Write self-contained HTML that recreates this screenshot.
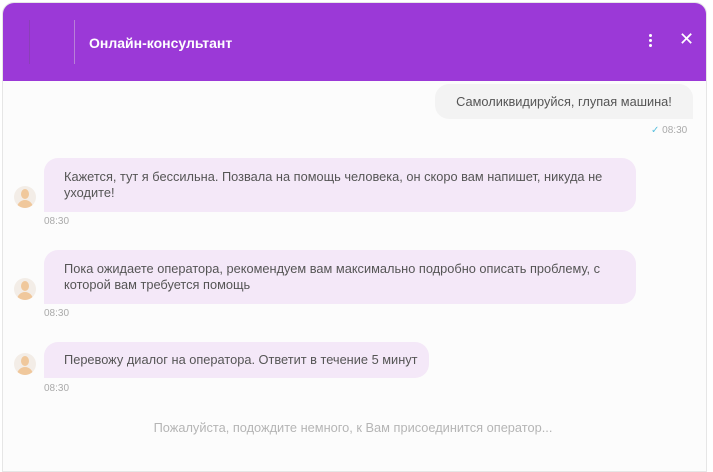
<!DOCTYPE html>
<html><head><meta charset="utf-8"><style>
*{margin:0;padding:0;box-sizing:border-box}
body{width:713px;height:464px;background:#fff;font-family:"Liberation Sans",sans-serif;position:relative;overflow:hidden}
.panel{position:absolute;left:2px;top:2px;width:705px;height:470px;background:#fcfcfc;border:1px solid #e6e6e6;border-radius:12px 12px 0 0;overflow:hidden}
.head{position:absolute;left:0;top:0;width:100%;height:78px;background:#9b39d7}
.title{position:absolute;left:86px;top:32px;color:#fff;font-weight:bold;font-size:14px}
.b{position:absolute;font-size:12.8px;color:#555;line-height:16px}
.bot{background:#f4e8f8;border-radius:14px 14px 14px 0;padding:0 19px 0 20px;display:flex;align-items:center}
.t{position:absolute;font-size:10px;color:#aaa}
.av{position:absolute;left:11px;width:22px;height:22px;border-radius:50%;background:#f3ede7;overflow:hidden}
.av:before{content:"";position:absolute;left:7px;top:3px;width:8px;height:10px;border-radius:50%;background:#f0c89c}
.av:after{content:"";position:absolute;left:3px;top:14px;width:16px;height:10px;border-radius:8px 8px 0 0;background:#f0c89c}
</style></head><body>
<div class="panel">
<div class="head">
<div style="position:absolute;left:26px;top:17px;width:46px;height:44px;border-left:1px solid #8a40b8;border-right:1px solid #b880d8"></div>
<div class="title">Онлайн-консультант</div>
<div style="position:absolute;left:646px;top:31px;width:3px;height:3px;background:#fff;border-radius:50%;box-shadow:0 5px 0 #fff,0 10px 0 #fff"></div>
<div style="position:absolute;left:676px;top:27px;color:#fff;font-size:18px;line-height:18px">✕</div>
</div>
<div class="b" style="left:432px;top:81px;width:258px;height:35px;background:#f3f3f3;border-radius:14px 14px 0 14px;display:flex;align-items:center;justify-content:center">Самоликвидируйся, глупая машина!</div>
<div class="t" style="left:648px;top:122px"><span style="color:#5bc0de">✓</span> 08:30</div>
<div class="av" style="top:183px"></div>
<div class="b bot" style="left:41px;top:155px;width:592px;height:54px">Кажется, тут я бессильна. Позвала на помощь человека, он скоро вам напишет, никуда не уходите!</div>
<div class="t" style="left:41px;top:213px">08:30</div>
<div class="av" style="top:275px"></div>
<div class="b bot" style="left:41px;top:247px;width:592px;height:54px">Пока ожидаете оператора, рекомендуем вам максимально подробно описать проблему, с которой вам требуется помощь</div>
<div class="t" style="left:41px;top:305px">08:30</div>
<div class="av" style="top:350px"></div>
<div class="b bot" style="left:41px;top:339px;width:385px;height:36px;white-space:nowrap">Перевожу диалог на оператора. Ответит в течение 5 минут</div>
<div class="t" style="left:41px;top:380px">08:30</div>
<div class="b" style="left:0;width:700px;top:417px;text-align:center;color:#b5b5b5">Пожалуйста, подождите немного, к Вам присоединится оператор...</div>
</div>
</body></html>
